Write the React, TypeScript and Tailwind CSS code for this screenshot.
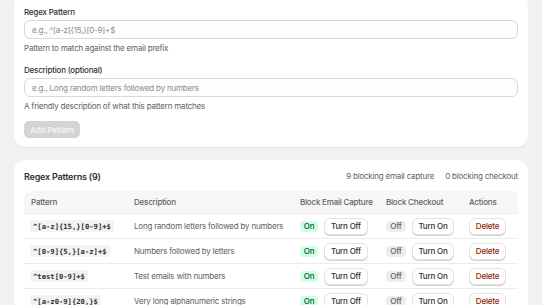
const patterns = [
  { pattern: "^[a-z]{15,}[0-9]+$", description: "Long random letters followed by numbers" },
  { pattern: "^[0-9]{5,}[a-z]+$", description: "Numbers followed by letters" },
  { pattern: "^test[0-9]+$", description: "Test emails with numbers" },
  { pattern: "^[a-z0-9]{20,}$", description: "Very long alphanumeric strings" },
];

const cols = "grid grid-cols-[103px_166px_86px_83px_56px] items-center";

export default function App() {
  return (
    <div className="min-h-screen overflow-hidden bg-[#f1f1f1] px-[14px] font-['Inter',sans-serif] text-[8px] tracking-[-0.2px] text-[#303030]">
      <section className="-mt-[6px] rounded-[11px] bg-white px-[10px] pb-[9px] pt-[13px] shadow-[0_1px_0_#e0e0e0]">
        <Field
          label="Regex Pattern"
          placeholder="e.g., ^[a-z]{15,}[0-9]+$"
          help="Pattern to match against the email prefix"
        />
        <div className="mt-[12px]">
          <Field
            label="Description (optional)"
            placeholder="e.g., Long random letters followed by numbers"
            help="A friendly description of what this pattern matches"
          />
        </div>
        <button className="mt-[10px] h-[17px] w-[56px] rounded-[5px] bg-[#d4d4d4] text-[8px] font-semibold text-[#f5f5f5]">
          Add Pattern
        </button>
      </section>

      <section className="mt-[13px] rounded-[11px] bg-white px-[10px] pt-[11px] pb-[10px] shadow-[0_1px_0_#e0e0e0]">
        <div className="flex items-center justify-between leading-[11px]">
          <h2 className="text-[9px] font-semibold">Regex Patterns (9)</h2>
          <div className="flex gap-[11px] text-[#616161]">
            <span>9 blocking email capture</span>
            <span>0 blocking checkout</span>
          </div>
        </div>

        <div className="mt-[9px]">
          <div className={`${cols} h-[22px] rounded-t-[6px] bg-[#f7f7f7] font-medium text-[#616161]`}>
            <span className="pl-[7px]">Pattern</span>
            <span className="pl-[7px]">Description</span>
            <span className="pl-[7px]">Block Email Capture</span>
            <span className="pl-[7px]">Block Checkout</span>
            <span className="pl-[7px]">Actions</span>
          </div>
          {patterns.map((p) => (
            <div key={p.pattern} className={`${cols} h-[25px] border-t border-[#ebebeb]`}>
              <div className="pl-[6px]">
                <code className="rounded-[3px] bg-[#f3f3f3] px-[3px] py-[1.5px] font-['DejaVu_Sans_Mono',monospace] text-[7.2px] font-bold tracking-normal text-[#303030]">
                  {p.pattern}
                </code>
              </div>
              <span className="pl-[7px] text-[#616161]">{p.description}</span>
              <div className="flex items-center gap-[6px] pl-[7px]">
                <span className="flex h-[11px] w-[18px] items-center justify-center rounded-[4px] bg-[#cdfee1] font-medium text-[#0c5132]">
                  On
                </span>
                <Btn w="w-[44px]">Turn Off</Btn>
              </div>
              <div className="flex items-center gap-[6px] pl-[7px]">
                <span className="flex h-[11px] w-[20px] items-center justify-center rounded-[4px] bg-[#ededed] font-medium text-[#616161]">
                  Off
                </span>
                <Btn w="w-[42px]">Turn On</Btn>
              </div>
              <div className="pl-[7px]">
                <Btn w="w-[37px]" danger>
                  Delete
                </Btn>
              </div>
            </div>
          ))}
        </div>
      </section>
    </div>
  );
}

function Field({ label, placeholder, help }: { label: string; placeholder: string; help: string }) {
  return (
    <div>
      <p className="font-medium leading-[10px]">{label}</p>
      <div className="mt-[3px] flex h-[19px] items-center rounded-[6px] border border-[#d9d9d9] bg-[#fdfdfd] pl-[7px] text-[#8a8a8a]">
        {placeholder}
      </div>
      <p className="mt-[4px] leading-[10px] text-[#616161]">{help}</p>
    </div>
  );
}

function Btn({ children, w, danger }: { children: string; w: string; danger?: boolean }) {
  return (
    <button
      className={`${w} h-[17px] rounded-[6px] border border-[#e3e3e3] bg-white font-medium shadow-[0_1px_0_#cfcfcf] ${
        danger ? "text-[#8e1f0b]" : "text-[#303030]"
      }`}
    >
      {children}
    </button>
  );
}
